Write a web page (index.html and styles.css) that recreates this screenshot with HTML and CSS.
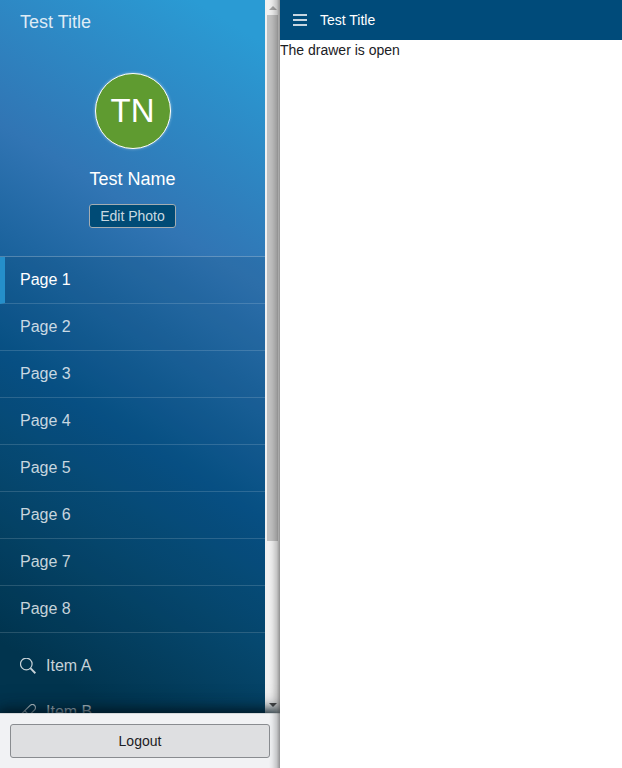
FILE: index.html
```html
<!DOCTYPE html>
<html lang="en">
<head>
<meta charset="utf-8">
<title>Test Title</title>
<meta name="viewport" content="width=device-width, initial-scale=1">
<link rel="stylesheet" href="styles.css">
</head>
<body>
<div class="app">
  <aside class="drawer">
    <div class="drawer-body">
      <div class="drawer-scroll">
        <header class="drawer-header">
          <h2 class="drawer-title">Test Title</h2>
          <div class="profile">
            <div class="avatar">TN</div>
            <div class="profile-name">Test Name</div>
            <button class="edit-photo" type="button">Edit Photo</button>
          </div>
        </header>
        <nav class="pages">
          <a class="page active" href="#p1">Page 1</a>
          <a class="page" href="#p2">Page 2</a>
          <a class="page" href="#p3">Page 3</a>
          <a class="page" href="#p4">Page 4</a>
          <a class="page" href="#p5">Page 5</a>
          <a class="page" href="#p6">Page 6</a>
          <a class="page" href="#p7">Page 7</a>
          <a class="page" href="#p8">Page 8</a>
        </nav>
        <nav class="links">
          <a class="link" href="#a">
            <svg class="icon" viewBox="0 0 16 16" aria-hidden="true"><circle cx="6.300" cy="6" r="5.800"/><path class="handle" d="M10.600 10.400l4.800 4.800"/></svg>
            Item A
          </a>
          <a class="link" href="#b">
            <svg class="icon" viewBox="0 0 16 16" aria-hidden="true"><path d="M.6 15.400L1.800 9.600L10.200 1.400C11.400.3 13.200.2 14.400 1.300C15.800 2.500 15.800 4.600 14.600 5.800L6.400 14.200z"/><path d="M4.700 6.700l4.700 4.700"/></svg>
            Item B
          </a>
        </nav>
      </div>
      <div class="scrollbar" aria-hidden="true">
        <svg class="arrow arrow-up" viewBox="0 0 8 4"><path d="M0 4L4 0L8 4z"/></svg>
        <div class="track"><div class="thumb"></div></div>
        <svg class="arrow arrow-down" viewBox="0 0 8 4"><path d="M0 0L4 4L8 0z"/></svg>
      </div>
    </div>
    <div class="drawer-footer">
      <button class="logout" type="button">Logout</button>
    </div>
  </aside>
  <div class="content">
    <header class="app-bar">
      <button class="menu" type="button" aria-label="Menu">
        <svg class="menu-icon" viewBox="0 0 14 12" aria-hidden="true"><path d="M0 1h14M0 6h14M0 11h14"/></svg>
      </button>
      <h1 class="app-title">Test Title</h1>
    </header>
    <main>The drawer is open</main>
  </div>
</div>
</body>
</html>
```
FILE: styles.css
```css
* { box-sizing: border-box; }

body {
  margin: 0;
  font: 14px/20px "Liberation Sans", Arial, sans-serif;
  color: #1b2024;
  background: #fff;
}

h1, h2 { margin: 0; font-weight: 400; }
button { font-family: inherit; margin: 0; }
a { color: inherit; text-decoration: none; }

.app {
  display: grid;
  grid-template-columns: 280px 1fr;
  height: 100vh;
}

.drawer {
  position: relative;
  display: flex;
  flex-direction: column;
  min-height: 0;
}

/* Edge shade cast by the content pane over the drawer */
.drawer::after {
  content: "";
  position: absolute;
  inset: 0 0 0 auto;
  width: 11px;
  pointer-events: none;
  background: linear-gradient(to left, rgba(0, 0, 0, .4), rgba(0, 0, 0, .18) 30%, rgba(0, 0, 0, .05) 70%, transparent);
}

.drawer-body {
  display: flex;
  flex: 1;
  min-height: 0;
}

.drawer-scroll {
  flex: 1;
  overflow-y: auto;
  scrollbar-width: none;
  color: rgba(255, 255, 255, .78);
  background: linear-gradient(32deg, #01344e 8%, #06486f 26%, #085389 41%, #3175b4 67%, #2a9bd4 95%);
}

.scrollbar {
  display: flex;
  flex-direction: column;
  align-items: center;
  width: 15px;
  background: #f1f1f1;
}

.arrow {
  width: 8px;
  height: 4px;
}

.arrow-up {
  margin: 6px 0 5px;
  fill: #a3a3a3;
}

.arrow-down {
  margin: 5px 0 6px;
  fill: #505050;
}

.track {
  flex: 1;
  width: 11px;
}

.thumb {
  height: 77%;
  background: #c1c1c1;
}

.drawer-header { padding: 12px 20px 28px; }

.drawer-title {
  font-size: 18px;
  line-height: 20px;
  color: rgba(255, 255, 255, .85);
}

.profile {
  display: flex;
  flex-direction: column;
  align-items: center;
  padding-top: 41px;
}

.avatar {
  width: 76px;
  height: 76px;
  border: 1px solid #fff;
  border-radius: 50%;
  background: #5f9b30;
  box-shadow: 0 0 3px rgba(255, 255, 255, .5);
  color: #fff;
  font-size: 33px;
  line-height: 74px;
  text-align: center;
}

.profile-name {
  margin: 20px 0 15px;
  font-size: 18px;
  line-height: 20px;
  color: #fff;
}

.edit-photo {
  height: 24px;
  padding: 0 10px;
  border: 1px solid #a4adb2;
  border-radius: 3px;
  background: #004b76;
  color: rgba(255, 255, 255, .8);
  font-size: 14px;
}

.pages {
  border-top: 1px solid rgba(255, 255, 255, .25);
  background: rgba(0, 50, 80, .1);
}

.page {
  display: block;
  height: 47px;
  padding-left: 20px;
  border-bottom: 1px solid rgba(255, 255, 255, .15);
  font-size: 16px;
  line-height: 46px;
}

.page.active {
  padding-left: 15px;
  border-left: 5px solid #258fca;
  color: #fff;
}

.links { padding: 10px 0 194px; }

.link {
  display: flex;
  align-items: center;
  gap: 10px;
  height: 46px;
  padding-left: 20px;
  font-size: 16px;
}

.icon {
  width: 16px;
  height: 16px;
  fill: none;
  stroke: currentColor;
  stroke-width: 1.2;
}

.icon .handle { stroke-width: 2; }

.drawer-footer {
  position: relative;
  padding: 10px;
  border-top: 1px solid #d5d8da;
  background: #f1f2f4;
  box-shadow: 0 0 12px 2px #001520, 0 0 24px rgba(0, 21, 32, .5);
  clip-path: inset(-30px 0 0 0);
}

.logout {
  display: block;
  width: 100%;
  height: 34px;
  border: 1px solid #898c90;
  border-radius: 3px;
  background: #dedfe1;
  color: #1b2024;
  font-size: 14px;
}

.app-bar {
  display: flex;
  align-items: center;
  height: 40px;
  background: #004b7a;
  color: #fff;
}

.menu {
  display: flex;
  align-items: center;
  justify-content: center;
  width: 40px;
  height: 40px;
  padding: 0;
  border: 0;
  background: none;
}

.menu-icon {
  width: 14px;
  height: 12px;
  stroke: #c6d5e0;
  stroke-width: 2;
}

.app-title {
  font-size: 14px;
  line-height: 20px;
}
```
